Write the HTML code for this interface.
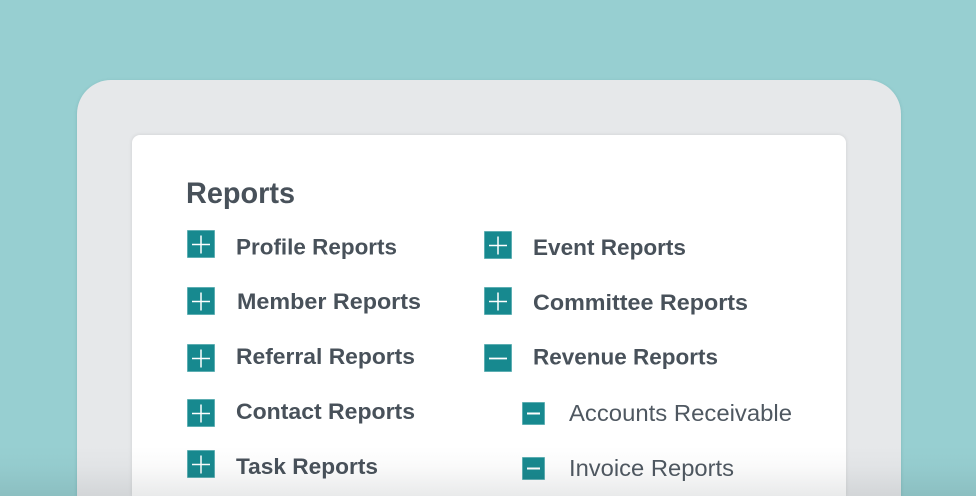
<!DOCTYPE html>
<html><head><meta charset="utf-8"><style>
html,body{margin:0;padding:0;width:976px;height:496px;overflow:hidden}
body{position:relative;background:#97cfd1;font-family:"Liberation Sans",sans-serif}
#wrap{position:absolute;left:0;top:0;width:976px;height:496px;overflow:hidden}
.outer{position:absolute;left:77px;top:80px;width:824px;height:416px;background:#e6e8ea;border-radius:34px 34px 0 0;box-shadow:0 1px 3px rgba(60,110,115,.25)}
.inner{position:absolute;left:132px;top:135px;width:714px;height:361px;background:#fff;border-radius:8px 8px 0 0;box-shadow:0 0 4px rgba(0,0,0,.1)}
svg{position:absolute;left:0;top:0}
.fade{position:absolute;left:0;top:446px;width:976px;height:50px;background:linear-gradient(to bottom,rgba(40,50,55,0),rgba(40,50,55,.025) 40%,rgba(40,50,55,.1))}
text{fill:#434c55}
.b{font-weight:700;font-size:22.5px;fill:#48515a}
.r{font-size:23px;fill:#4f5861}
</style></head><body>
<div id="wrap">
<div class="outer"></div><div class="inner"></div>
<svg width="976" height="496" viewBox="0 0 976 496" xmlns="http://www.w3.org/2000/svg">
<text x="186" y="203" font-size="29.5" font-weight="700" textLength="109" lengthAdjust="spacingAndGlyphs" style="fill:#48515a">Reports</text>
<g fill="#17898f" stroke="#8cc8ca" stroke-width="0.6">
<rect x="187.300" y="230.300" width="27.400" height="27.400"/>
<rect x="187.300" y="287.300" width="27.400" height="27.400"/>
<rect x="187.300" y="344.300" width="27.400" height="27.400"/>
<rect x="187.300" y="399.300" width="27.400" height="27.400"/>
<rect x="187.300" y="450.300" width="27.400" height="27.400"/>
<rect x="484.300" y="231.300" width="27.400" height="27.400"/>
<rect x="484.300" y="287.300" width="27.400" height="27.400"/>
<rect x="484.300" y="344.300" width="27.400" height="27.400"/>
<rect x="522.300" y="402.300" width="22.400" height="22.400"/>
<rect x="522.300" y="457.300" width="22.400" height="22.400"/>
</g>
<g stroke="#ffffff" stroke-width="1.500" fill="none">
<path d="M192 244.500h18M201 235.500v18"/>
<path d="M192 301.500h18M201 292.500v18"/>
<path d="M192 358.500h18M201 349.500v18"/>
<path d="M192 413.500h18M201 404.500v18"/>
<path d="M192 464.500h18M201 455.500v18"/>
<path d="M489 245.500h18M498 236.500v18"/>
<path d="M489 301.500h18M498 292.500v18"/>
<path d="M489 358.500h18" stroke-width="1.800"/>
<path d="M527 413.500h13" stroke-width="2"/>
<path d="M527 468.500h13" stroke-width="2"/>
</g>
<text class="b" x="236" y="254.500" textLength="161" lengthAdjust="spacingAndGlyphs">Profile Reports</text>
<text class="b" x="237" y="309" textLength="184" lengthAdjust="spacingAndGlyphs">Member Reports</text>
<text class="b" x="236" y="364" textLength="179" lengthAdjust="spacingAndGlyphs">Referral Reports</text>
<text class="b" x="236" y="419" textLength="179" lengthAdjust="spacingAndGlyphs">Contact Reports</text>
<text class="b" x="236" y="474" textLength="142" lengthAdjust="spacingAndGlyphs">Task Reports</text>
<text class="b" x="533" y="255" textLength="153" lengthAdjust="spacingAndGlyphs">Event Reports</text>
<text class="b" x="533" y="310" textLength="215" lengthAdjust="spacingAndGlyphs">Committee Reports</text>
<text class="b" x="533" y="364.500" textLength="185" lengthAdjust="spacingAndGlyphs">Revenue Reports</text>
<text class="r" x="569" y="421" textLength="223" lengthAdjust="spacingAndGlyphs">Accounts Receivable</text>
<text class="r" x="569" y="476" textLength="165" lengthAdjust="spacingAndGlyphs">Invoice Reports</text>
</svg>
<div class="fade"></div>
</div>
</body></html>
